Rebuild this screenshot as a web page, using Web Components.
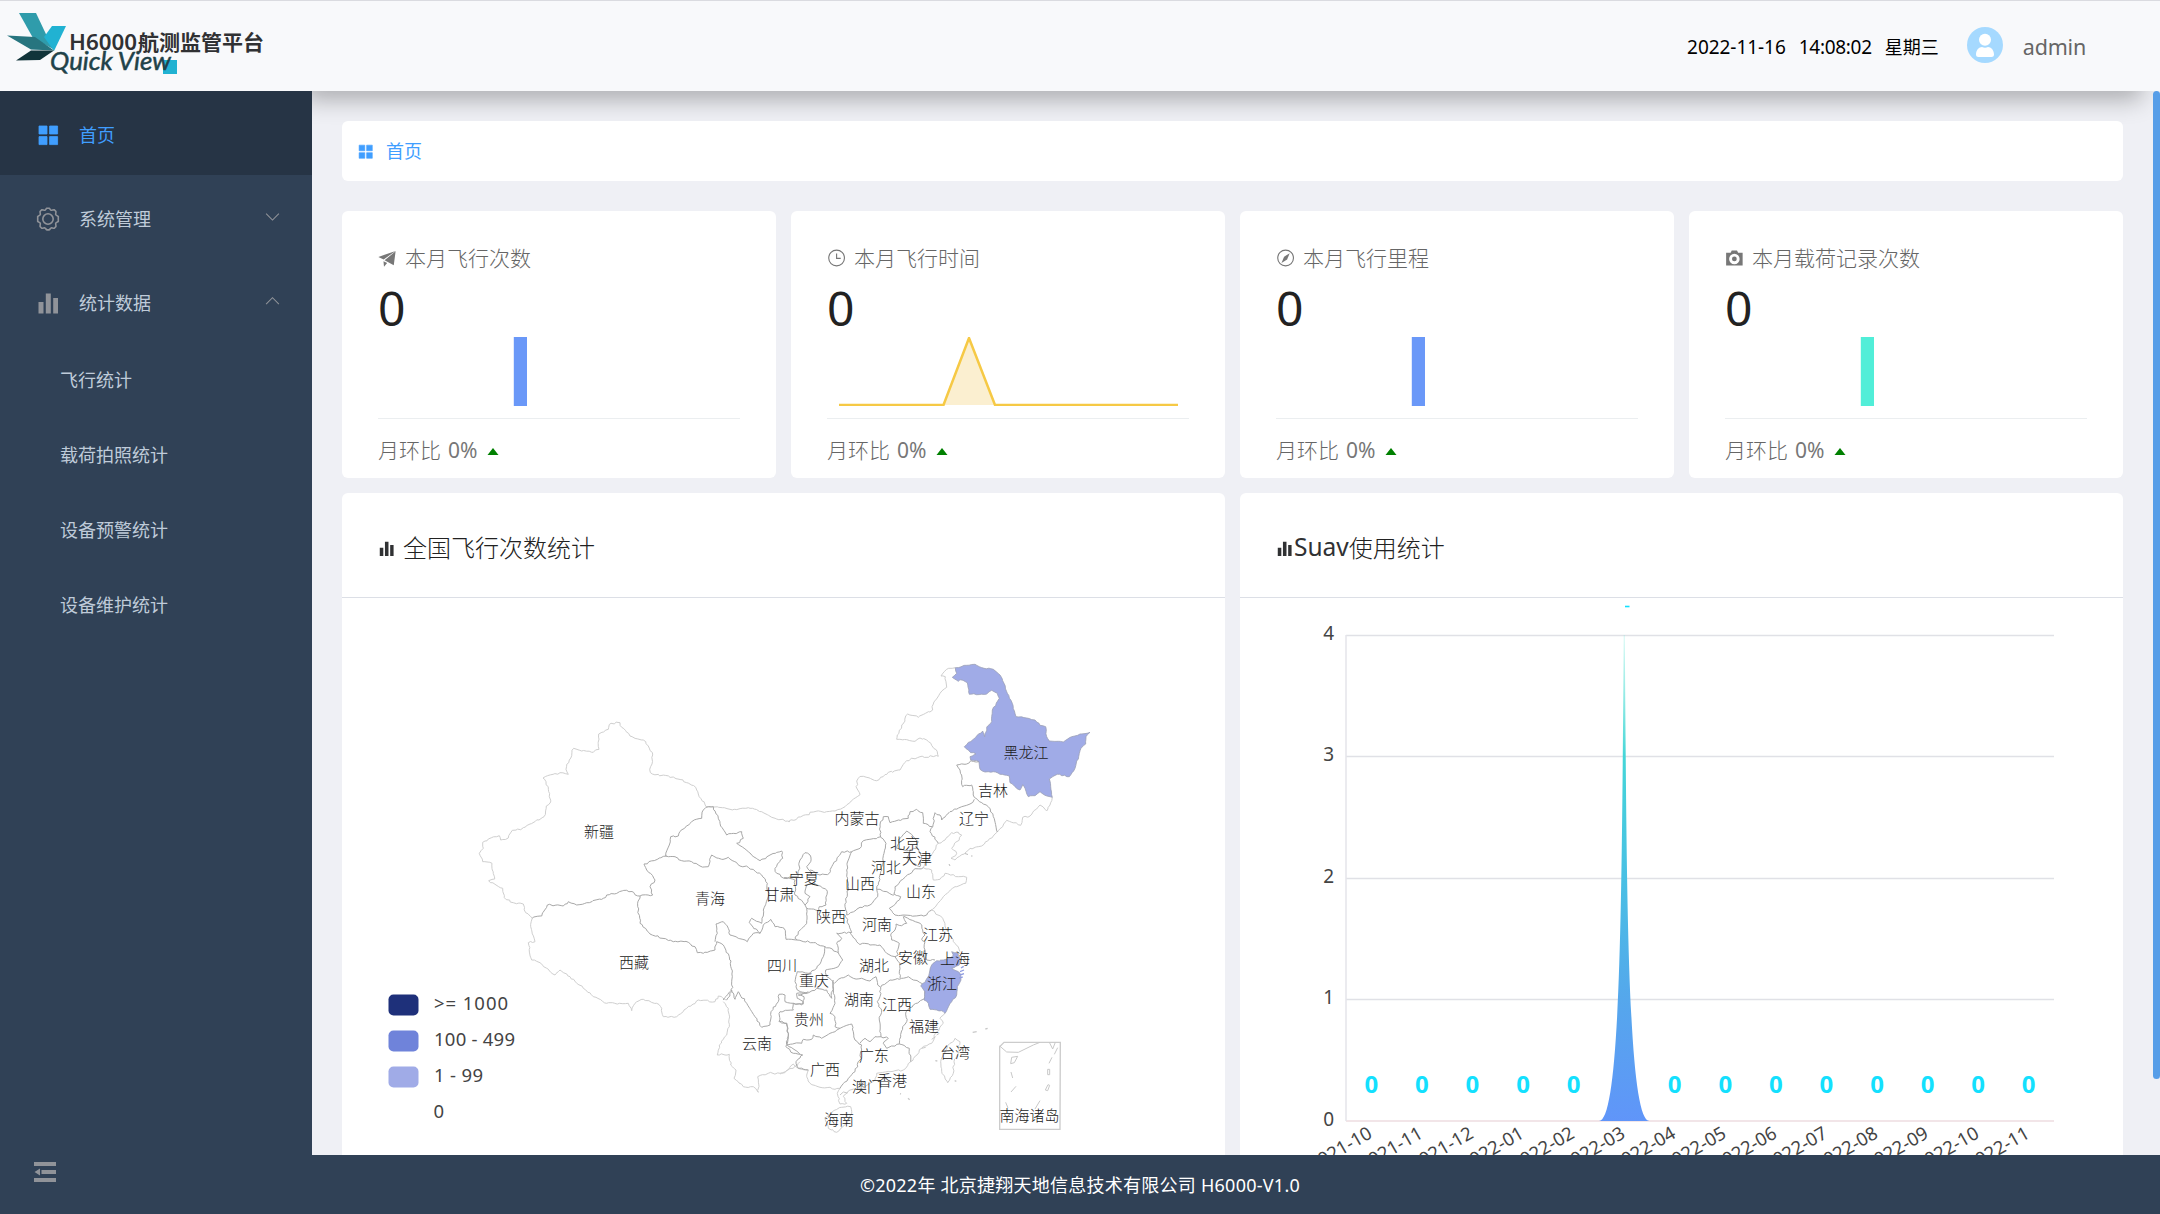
<!DOCTYPE html>
<html lang="zh-CN">
<head>
<meta charset="utf-8">
<title>H6000航测监管平台</title>
<style>
html,body{margin:0;height:100%}
body{font-family:"Noto Sans","Noto Sans CJK SC",sans-serif;font-weight:400;font-size:18px;background:#eff0f5;overflow:hidden}
</style>
</head>
<body>
<app-shell></app-shell>
<script>
const define = (name, markup, setup) => {
  const tpl = document.createElement('template');
  tpl.innerHTML = '<style>*{box-sizing:border-box}svg{display:block;flex:none}</style>' + markup;
  customElements.define(name, class extends HTMLElement {
    constructor() {
      super();
      this.attachShadow({mode: 'open'}).appendChild(tpl.content.cloneNode(true));
    }
    connectedCallback() { if (setup) setup(this.shadowRoot, this); }
  });
};

const ICONS = {
  grid: '<path d="M3 3h8v8H3zM13.6 3h8v8h-8zM3 13.6h8v8H3zM13.6 13.6h8v8h-8z" stroke="currentColor" stroke-width=".8" stroke-linejoin="round"/>',
  gear: '<g fill="none" stroke="currentColor" stroke-width="1.6"><circle cx="12" cy="12" r="5.2"/><path d="M9 3.2c.6-.2 1-1.6 1.8-2h2.4c.8.4 1.2 1.8 1.8 2 .8.3 2.300-.6 3.200-.4l1.700 1.700c.3.9-.5 2.400-.2 3.200.3.6 1.800 1.100 2.600 1.900v4.800c-.8.7-2.300 1.200-2.600 1.900-.3.800.5 2.300.2 3.200l-1.700 1.700c-.9.3-2.400-.6-3.200-.3-.6.2-1 1.600-1.800 2h-2.400c-.8-.4-1.200-1.800-1.800-2-.8-.3-2.300.6-3.200.3l-1.700-1.700c-.3-.9.5-2.400.2-3.200-.3-.7-1.800-1.200-2.600-1.900V9.600c.8-.8 2.300-1.300 2.600-1.900.3-.8-.5-2.300-.2-3.200l1.700-1.700c.9-.2 2.400.7 3.200.4z"/></g>',
  bars: '<path d="M2.500 11H7.500V22.500H2.500zM9.800 2.500h5v20h-5zM17.200 7H22v15.500h-4.800z"/>',
  plane: '<path d="M.5 10.500 23.500 2.500 7.500 14zM8.800 15 23.500 3 21 21.500zM7.300 16.200 12.200 18.500 8 23.500z"/>',
  clock: '<g fill="none" stroke="currentColor" stroke-width="1.500"><circle cx="12.800" cy="12" r="10.500"/><path d="M12.800 6v6.500h5.500"/></g>',
  compass: '<circle cx="12.800" cy="12" r="10.500" fill="none" stroke="currentColor" stroke-width="1.500"/><path d="M18.300 5.500 14.800 14l-7.500 4.800 3.500-8.600z"/>',
  camera: '<path fill-rule="evenodd" d="M1.500 5h6L9 2h7l1.500 3h6v17h-22zM12.500 6.300a7 7 0 1 0 0 14 7 7 0 0 0 0-14zM12.500 10a3.200 3.200 0 1 1 0 6.400 3.200 3.200 0 0 1 0-6.400z"/>',
  down: '<path d="m3 8 9 9 9-9" fill="none" stroke="currentColor" stroke-width="1.500"/>',
  up: '<path d="m3 17 9-9 9 9" fill="none" stroke="currentColor" stroke-width="1.500"/>',
  fold: '<path d="M1 2h22v4H1zM8.500 10h14.500v4H8.500zM1 18h22v4H1zM1.500 12 7 8.500v7z"/>'
};
define('ui-icon', '<style>:host{display:block;flex:none;width:24px;height:24px}svg{width:100%;height:100%;overflow:visible}</style><svg viewBox="0 0 24 24" fill="currentColor"></svg>',
  (root, el) => { root.querySelector('svg').innerHTML = ICONS[el.getAttribute('name')]; });

define('brand-logo', `
<style>:host{display:block}</style>
<svg width="280" height="90" viewBox="0 0 280 90">
  <path d="M19 12h17l17 36-20-11z" fill="#2f9cab"/>
  <path d="M52 25h14L54 50 44 36z" fill="#21b2d2"/>
  <path d="M7 34.500 35 36l19 13.500-23-1z" fill="#27757f"/>
  <path d="m16 59.500 15-10h23L40 59z" fill="#11343a"/>
  <path d="M163 59h14v14h-14z" fill="#21b2d2"/>
  <text x="50" y="69" font-family="Lato,sans-serif" font-style="italic" font-weight="400" font-size="24.500" fill="#1f4249" stroke="#1f4249" stroke-width=".5" textLength="121" lengthAdjust="spacingAndGlyphs">Quick View</text>
  <text x="69" y="49.300" font-size="21.500" font-weight="600" fill="#303133" font-family="Noto Sans,sans-serif" textLength="68" lengthAdjust="spacingAndGlyphs">H6000</text>
  <text x="138" y="49" font-size="21" font-weight="700" fill="#303133" font-family="Noto Sans CJK SC,sans-serif">航测监管平台</text>
</svg>`);

define('app-header', `
<style>
:host{display:flex;height:91px;flex:none;align-items:center;background:#f8f9fb;border-top:1px solid #dadbe0;color:#000;padding-right:74px}
.when{margin-left:auto;display:flex;gap:13px;line-height:24px;padding-top:2px}
.num{font-size:19px;letter-spacing:-.05px}
.time{letter-spacing:-.3px}
.avatar{margin:-2px 20px 0 28px}
.user{font-size:21.500px;color:#666;letter-spacing:-.2px;padding-top:0}
</style>
<brand-logo></brand-logo>
<div class="when"><span class="num">2022-11-16</span><span class="num time">14:08:02</span><span>星期三</span></div>
<svg class="avatar" width="36" height="36" viewBox="0 0 36 36"><circle cx="18" cy="18" r="18" fill="#a5d9ff"/><circle cx="18" cy="12.800" r="6" fill="#fff"/><path d="M9 27.500c0-4.500 3-7.500 6-7.500 2 1 4 1 6 0 3 0 6 3 6 7.500 0 1.700-1 2.500-2.500 2.500h-13C10 30 9 29.200 9 27.500z" fill="#fff"/></svg>
<span class="user">admin</span>`);

define('menu-item', `
<style>
:host{display:flex;align-items:center;height:84px;padding:4px 31px 0 36px;color:#bfcbd9;font-size:18px}
:host([active]){background:#263445;color:#409eff}
:host([sub]){height:75px;padding:0 0 1px 60px}
.ic{color:#909399;margin-right:19px}
:host([active]) .ic{color:#409eff}
.arrow{margin-left:auto;width:17px;height:17px;color:#909399;margin-top:-5px}
span{line-height:26px}
</style><span><slot></slot></span>`,
(root, el) => {
  if (el.hasAttribute('icon')) { const n = document.createElement('ui-icon'); n.className = 'ic'; n.setAttribute('name', el.getAttribute('icon')); root.querySelector('span').before(n); }
  if (el.hasAttribute('arrow')) { const a = document.createElement('ui-icon'); a.className = 'arrow'; a.setAttribute('name', el.getAttribute('arrow')); root.appendChild(a); }
});

define('side-menu', `
<style>:host{display:block;width:312px;flex:none;background:#304156}</style>
<nav>
<menu-item active icon="grid">首页</menu-item>
<menu-item icon="gear" arrow="down">系统管理</menu-item>
<menu-item icon="bars" arrow="up">统计数据</menu-item>
<menu-item sub>飞行统计</menu-item>
<menu-item sub>载荷拍照统计</menu-item>
<menu-item sub>设备预警统计</menu-item>
<menu-item sub>设备维护统计</menu-item>
</nav>`);

define('crumb-bar', `
<style>:host{display:flex;align-items:center;height:60px;flex:none;background:#fff;border-radius:6px;color:#409eff;padding-left:15px;gap:12px;position:relative}
ui-icon{width:17px;height:17px}span{line-height:26px}</style>
<ui-icon name="grid"></ui-icon><span><slot></slot></span>`);

define('metric-card', `
<style>
:host{display:flex;flex-direction:column;flex:1;height:267px;background:#fff;border-radius:6px;padding:0 36px;color:#666;font-weight:300}
.title{display:flex;align-items:center;gap:9px;font-size:21px;line-height:30px;margin-top:32px}
ui-icon{width:18px;height:18px;color:#777}
.value{font-size:48px;font-weight:400;line-height:50px;color:#222;margin-top:10px;height:54px}
.rule{border-top:1px solid #ebeef0;margin-top:12px}
.foot{display:flex;align-items:center;font-size:21px;line-height:30px;margin-top:16px}
.foot b{font-weight:400;font-size:21px;color:#777;margin-left:7px}
.foot svg{margin:3px 0 0 10px}
</style>
<div class="title"><ui-icon></ui-icon><span><slot></slot></span></div>
<div class="value">0</div>
<svg class="chart" width="362" height="69" viewBox="0 0 362 69"></svg>
<div class="rule"></div>
<div class="foot"><span>月环比</span><b>0%</b><svg width="12" height="7" viewBox="0 0 12 7"><path d="M.500 7 6 0l5.500 7z" fill="#008000"/></svg></div>`,
(root, el) => {
  const n = document.createElement('ui-icon'); n.setAttribute('name', el.getAttribute('icon'));
  root.querySelector('ui-icon').replaceWith(n);
  const c = el.getAttribute('color');
  root.querySelector('.chart').innerHTML = el.hasAttribute('line')
    ? '<path d="M117 68 142 1 168 68z" fill="#fbefd0"/><path d="M12 68H116.500L142 1 168 68H351" fill="none" stroke="' + c + '" stroke-width="2.500"/>'
    : '<rect x="135.800" y="0" width="13.200" height="69" fill="' + c + '"/>';
});

define('chart-panel', `
<style>
:host{display:flex;flex-direction:column;flex:1;min-width:0;background:#fff;border-radius:6px 6px 0 0;overflow:hidden}
header{display:flex;align-items:center;height:105px;flex:none;border-bottom:1px solid #dcdfe6;padding:3px 0 0 36px;color:#222;font-size:24px;font-weight:300}
ui-icon{width:17px;height:17px;margin-top:3px;color:#303133}
:host([wide]) header{gap:8px}
::slotted(b){font-weight:400;color:#303133;font-size:24.500px;margin-left:1px}
</style>
<header><ui-icon name="bars"></ui-icon><slot name="title"></slot></header>
<slot></slot>`);

/* Province outlines; each line names its sheet and is plotted at three units per pixel. */
const SHEETS = { A: [460, 640], B: [780, 640], C: [780, 880], D: [660, 780] };
const OUTER = [
 ['A','217,834 197,818 190,792 160,788 133,773 128,745 105,733 86,722 104,717 97,690 96,670 68,665 58,640 70,625 68,607 85,597 118,587 122,600 145,594 157,571 182,569 210,552 252,530 259,498 272,486 266,455 258,425 249,414 300,398 325,403 318,388 328,360 341,325 365,333 400,337 417,328 416,282 445,268 453,250 480,248 485,262 510,288 550,300 565,318 578,345 576,372 569,388 577,402 640,411 680,428 707,442 722,475 738,500 762,501 810,508 870,505 905,515 935,532 990,545'],
 ['B','25,545 100,516 165,513 195,500 240,464 228,440 235,415 250,409 290,422 325,397 360,390 380,362 420,350 475,349 472,335 440,300 420,294 405,304 350,298 352,285 383,222 415,232 458,210 456,200 480,160 500,142 496,110 483,108 500,88 526,83'],
 ['B','817,472 810,495 800,513 780,495 750,528 728,532 722,556 680,541 652,576 605,618 570,625 525,660 513,655 530,640 515,625 545,585 535,577 515,578 495,600 475,610 458,640 440,665 430,683 455,690 460,720 480,718 495,700 535,710 560,712 557,730 525,740 490,770 470,795 455,810 488,835 500,870 525,910 540,935'],
 ['A','217,834 212,860 225,905 205,908 215,960 240,968 285,1005 300,990 330,1010 370,1045 400,1070 440,1090 505,1090 515,1112 525,1090 550,1078 590,1090 605,1105 610,1130 650,1130 680,1105 715,1080 765,1085 775,1068 800,1080'],
 ['A','790,1085 805,1105 808,1160 800,1185 778,1215 772,1245 808,1243 812,1275 828,1290 822,1315 850,1340 880,1340 895,1357 893,1310 925,1300 960,1300 1000,1285 1020,1265'],
 ['C','0,582 25,570 40,552 60,567 85,570 80,590 90,610 120,622 150,622 165,628 180,625 172,640 180,672 200,670 190,650 210,630 250,625 285,600 290,580 330,575 370,570 392,545 425,505 455,490 470,455 490,430 480,415 495,398'],
 ['C','165,690 185,682 212,680 215,700 200,730 170,757 145,745 135,715 165,690'],
 ['C','525,475 540,485 535,520 522,545 520,580 503,608 485,575 482,545 495,515 510,490 525,475']
];
const INNER = [
 ['B','597,365 572,362 560,372 530,375 540,390 548,440 575,435 583,472 592,478 610,492 625,500 640,530 652,576'],
 ['B','583,478 570,492 545,500 510,515 485,540 480,525 465,518 458,560 450,575 475,610'],
 ['B','302,592 300,555 310,530 325,530 330,548 385,535 390,515 410,508 428,518 430,550 458,560'],
 ['B','430,683 400,690 375,712 345,740 342,762 362,770 350,785 328,805 345,825 370,825 405,828 440,825 455,810'],
 ['B','302,592 318,610 312,640 305,690 290,748 342,765'],
 ['B','290,748 293,770 270,795 240,802 200,825'],
 ['B','215,635 205,660 200,690 205,740 195,800 200,825'],
 ['B','302,590 250,602 240,625 215,635 185,635 155,680 148,700 120,705 90,690'],
 ['B','365,590 380,573 400,590 415,605 410,625 380,632 350,625 355,600 365,590'],
 ['B','410,625 425,650 420,680 400,670 380,655 390,630'],
 ['D','160,80 180,130 200,165 245,155 250,175 230,190 265,215 300,242 330,225 365,213 368,235 345,265 350,280 372,295 405,290 415,290 420,240 435,218 450,225 452,245 440,260 455,280'],
 ['D','372,293 405,300 405,345 435,375 450,350 435,340 440,315 465,310 500,330 498,375 478,380 478,393 440,385'],
 ['D','160,80 138,82 130,90 125,115 95,125 60,155 55,168 32,170 28,195 17,228'],
 ['A','620,648 552,672 560,690 585,720 570,740 578,765 540,768'],
 ['A','217,834 245,828 262,795 310,798 325,785 350,795 380,788 430,775 440,765 500,751 540,768'],
 ['A','540,768 533,800 540,850 570,882 640,905 685,907 705,920 712,938 730,940 765,930 770,905'],
 ['D','17,228 45,230 65,242 95,245 120,258 145,260 155,225 185,238 205,232 240,258 265,262 305,285 322,310 325,350 318,370 310,390 305,430 275,415 268,428 300,460 280,460 262,485 235,475 210,465 205,445 190,425 168,432 172,460 165,485'],
 ['D','300,460 310,435 332,418 345,440 372,445 378,478 412,480 460,488 495,500 535,518'],
 ['D','412,480 405,475 415,455 440,430 440,385 435,375'],
 ['D','555,405 575,458 530,460 545,475 530,490 535,518 548,540 535,560 497,570 500,590 520,605 515,655 500,630 470,625 440,640'],
 ['D','495,500 490,530 470,565 445,580 412,575 405,605 412,630 440,640 410,640 412,655 430,665 425,675 400,670'],
 ['D','170,485 190,495 208,530 217,590 215,635 200,660'],
 ['A','790,1080 815,1050 825,1078 835,1055 860,1090 885,1130 905,1162 930,1155 933,1115 955,1085 957,1063 975,1065 975,1085 1000,1090 1000,1110 960,1115 957,1145 980,1150 985,1190 978,1220 1000,1240 1020,1243'],
 ['C','40,370 70,372 72,350 55,345 85,335'],
 ['C','0,425 20,430 25,460 22,495 45,490 65,490 70,478 95,478 100,465 125,475 150,460 165,455 180,445'],
 ['C','160,300 160,340 165,370 150,400 165,410 165,440 180,445 190,440 215,432 220,455 225,480 245,495 245,510'],
 ['C','163,310 175,298 205,285 220,295 245,295 270,303 288,290 293,315 302,322 300,350 292,365 305,390 298,420 303,470'],
 ['C','240,490 255,475 270,485 285,470 303,470 325,475 310,490 320,505 358,492 388,505 392,545'],
 ['C','302,322 330,300 365,295 385,290 400,300 425,310 435,330 435,355 400,375 378,395 380,425 368,440 358,492'],
 ['C','245,510 240,540 225,575 205,595 180,625'],
 ['C','22,495 45,510 68,525 48,545 55,565 85,570'],
 ['C','210,160 235,190 270,195 300,195 320,220 345,230 355,225 350,215 358,190 335,180 332,165 345,150 348,132 365,137 380,130 370,110'],
 ['C','345,230 360,250 360,295'],
 ['C','370,108 420,130 435,165 425,178 435,185 435,210 440,240 465,240']
];
const FILLED = [
 ['B','526,83 560,76 585,73 612,85 640,88 660,105 672,130 682,160 697,190 708,230 740,234 765,240 780,256 797,260 800,290 808,303 850,306 875,290 900,282 930,277 918,290 917,312 903,325 896,350 885,385 868,410 832,403 808,417 812,440 817,472 795,466 780,455 765,467 745,470 735,445 728,434 720,450 705,440 690,428 688,408 660,403 640,395 615,396 600,388 597,365 572,360 570,350 588,342 572,338 553,320 580,298 608,273 614,290 620,262 635,245 637,210 658,175 652,160 635,151 620,162 568,163 562,128 540,119 535,124 517,112 530,100 526,83'],
 ['C','470,242 490,240 510,235 520,225 515,215 530,218 540,235 538,255 515,265 540,280 543,300 532,320 530,345 515,365 495,400 485,392 470,390 450,388 445,370 432,360 435,335 422,318 438,300 448,280 455,255 470,242']
];
const PLACES = [['新疆',599,832],['西藏',634,963],['青海',710,899],['甘肃',779.5,895],['四川',782,966],['云南',757,1044],['黑龙江',1026,753],['吉林',993,791],['辽宁',974,819],['内蒙古',857,819],['北京',905,844],['天津',917,859],['河北',886,868],['宁夏',804,879],['山西',860,884],['山东',921,892],['陕西',831,917],['河南',877,925],['江苏',938,935],['安徽',913,958],['上海',955,959],['湖北',874,966],['重庆',814,981],['浙江',942,984],['湖南',859,1000],['江西',897,1005],['贵州',809,1020],['福建',924,1027],['台湾',955,1053],['广东',874,1056],['广西',825,1070],['香港',892,1081],['澳门',867,1087],['海南',839,1120],['南海诸岛',1029.5,1116]];
const noise = (x, y) => { const s = Math.sin(x * 12.9898 + y * 78.233) * 43758.5453; return (s - Math.floor(s)) * 2 - 1; };
const trace = ([sheet, str], amp = .9) => {
  const [ox, oy] = SHEETS[sheet];
  const p = str.split(' ').map(q => { const [x, y] = q.split(',').map(Number); return [ox + x / 3, oy + y / 3]; });
  let d = 'M' + p[0].map(v => v.toFixed(1));
  for (let i = 1; i < p.length; i++) {
    const [ax, ay] = p[i - 1], [bx, by] = p[i];
    const n = Math.max(1, Math.round(Math.hypot(bx - ax, by - ay) / 2.6));
    for (let k = 1; k < n; k++) {
      const x = ax + (bx - ax) * k / n, y = ay + (by - ay) * k / n;
      d += 'L' + (x + noise(x, y) * amp).toFixed(1) + ',' + (y + noise(y, x) * amp).toFixed(1);
    }
    d += 'L' + bx.toFixed(1) + ',' + by.toFixed(1);
  }
  return d;
};

define('china-map', `
<style>:host{display:block}text{font-family:"Noto Sans","Noto Sans CJK SC",sans-serif}</style>
<svg width="883" height="557" viewBox="342 598 883 557">
  <g id="lines" fill="none" stroke-linejoin="round"></g>
  <g transform="translate(780 880) scale(.33333)" fill="none" stroke="#c8c8c8" stroke-width="3">
    <path d="M659 500 672 487H841L840 748H659z" stroke="#ccc" stroke-width="4"/>
    <path d="m659 498 21 18 35 1 45-22 20-8M808 487l10 20 8-20M833 503l-10 20M816 532l-9 18M803 568h6v16h-6zM804 614l5 2-6 16-7-2zM780 662l-15 25M693 576l5 18M708 619l-15 17M677 667l7 17M695 532l18-3-10 19-11 3z"/>
    <path d="m540 275 12-5M540 285l12-4M538 294l10-3M543 264l8-5" stroke="#8f9ce0" stroke-width="4"/>
    <path d="m578 457 12-2M616 447l7-2M384 655l5 4M360 641l3 1M466 542l6 1M524 602l5 2" stroke-width="4"/>
    <path d="m180 645 10-9 12 3M455 478l12-8M425 505l12-3M470 465l8-5" />
  </g>
  <path d="M965 853.500l3 1M971 856h1.500M949 864l1 2" stroke="#bbb"/>
  <g id="places" font-size="15" font-weight="300" fill="#1a1a1a" text-anchor="middle"></g>
  <g font-size="18.500" fill="#444">
    <rect x="388.500" y="994.500" width="30" height="21" rx="5" fill="#1e307a"/><text x="434" y="1009.500" textLength="74">&gt;= 1000</text>
    <rect x="388.500" y="1030.500" width="30" height="21" rx="5" fill="#6f83da"/><text x="434" y="1045.500" textLength="81">100 - 499</text>
    <rect x="388.500" y="1066.500" width="30" height="21" rx="5" fill="#a0abe7"/><text x="434" y="1081.500" textLength="49">1 - 99</text>
    <text x="433.500" y="1117.500">0</text>
  </g>
</svg>`, root => {
  root.querySelector('#lines').innerHTML =
    OUTER.map(l => '<path stroke="#cfcfcf" d="' + trace(l) + '"/>').join('') +
    INNER.map(l => '<path stroke="#a8a8a8" d="' + trace(l) + '"/>').join('') +
    FILLED.map(l => '<path stroke="#9a9fb5" stroke-width=".8" fill="#a0abe7" d="' + trace(l, .6) + 'Z"/>').join('');
  root.querySelector('#places').innerHTML = PLACES.map(([t, x, y]) => '<text x="' + x + '" y="' + (y + 4.5) + '">' + t + '</text>').join('');
});

define('usage-chart', `
<style>:host{display:block}text{font-family:"Noto Sans","Noto Sans CJK SC",sans-serif}</style>
<svg width="883" height="557" viewBox="1240 598 883 557">
  <defs><linearGradient id="g" x1="0" y1="0" x2="0" y2="1"><stop offset="0" stop-color="#5ee6d4" stop-opacity=".25"/><stop offset=".25" stop-color="#45d6d8"/><stop offset=".5" stop-color="#49c0e4"/><stop offset=".75" stop-color="#55a7ec"/><stop offset="1" stop-color="#6095f9"/></linearGradient></defs>
  <g id="axis"></g>
  <path transform="translate(1599 635) scale(5.050 48.600)" d="M0,10 L10,10 C5.500,10 5.500,5 5.100,0 L4.900,0 C4.500,5 4.500,10 0,10z" fill="url(#g)"/>
  <path d="M1625 606.500h4.500" stroke="#13e0fe" stroke-width="1.600"/>
  <g id="zeros" font-size="24" font-weight="700" fill="#13e0fe" text-anchor="middle"></g>
  <g id="months" font-size="18.500" fill="#444" text-anchor="end"></g>
</svg>`, root => {
  let axis = '';
  for (let i = 0; i <= 4; i++) {
    const y = [1121, 999.5, 878.5, 756.5, 635.5][i];
    axis += '<path d="M1346 ' + y + 'H2054" stroke="' + (i ? '#e0e1e6' : '#eedde0') + '" stroke-width="1.500"/><text x="1334" y="' + (y + 4.5) + '" font-size="19" fill="#444" text-anchor="end">' + i + '</text>';
  }
  root.querySelector('#axis').innerHTML = axis + '<path d="M1346 635V1121" stroke="#e4e5ea" stroke-width="1.500"/>';
  const months = ['2021-10','2021-11','2021-12','2022-01','2022-02','2022-03','2022-04','2022-05','2022-06','2022-07','2022-08','2022-09','2022-10','2022-11'];
  root.querySelector('#zeros').innerHTML = months.map((m, i) => i === 5 ? '' : '<text x="' + (1371.3 + i * 50.57) + '" y="1093">0</text>').join('');
  root.querySelector('#months').innerHTML = months.map((m, i) => '<text transform="translate(' + (1373.5 + i * 50.57) + ' 1137) rotate(-30)">' + m + '</text>').join('');
});

define('app-main', `
<style>
:host{display:flex;flex:1;min-width:0;position:relative;overflow:hidden;background:#eff0f5}
:host::before{content:"";position:absolute;left:-8px;right:18px;top:-30px;height:30px;box-shadow:0 8px 24px rgba(0,0,0,.3)}
main{display:flex;flex-direction:column;flex:1;min-width:0;padding:30px 30px 0;position:relative}
.row{display:flex;gap:15px}
.cards{margin:30px 0 15px}
.panels{flex:1}
.bar{width:7px;height:988px;background:#579ee8;border-radius:4px;flex:none;position:relative}
</style>
<main>
<crumb-bar>首页</crumb-bar>
<section class="row cards">
<metric-card icon="plane" color="#6a98f8">本月飞行次数</metric-card>
<metric-card icon="clock" color="#f6c945" line>本月飞行时间</metric-card>
<metric-card icon="compass" color="#6a98f8">本月飞行里程</metric-card>
<metric-card icon="camera" color="#51eed8">本月载荷记录次数</metric-card>
</section>
<section class="row panels">
<chart-panel wide><span slot="title">全国飞行次数统计</span><china-map></china-map></chart-panel>
<chart-panel><b slot="title">Suav</b><span slot="title">使用统计</span><usage-chart></usage-chart></chart-panel>
</section>
</main>
<div class="bar"></div>`);

define('app-footer', `
<style>
:host{display:grid;grid-template-columns:1fr auto 1fr;height:59px;flex:none;background:#304156;color:#fff;font-size:18px;align-items:center}
ui-icon{margin:-25px 0 0 33px;color:#909399}
p{margin:-1px 0 0;letter-spacing:.25px}
</style>
<ui-icon name="fold"></ui-icon><p>©2022年 北京捷翔天地信息技术有限公司 H6000-V1.0</p><span></span>`);

define('app-shell', `
<style>:host{display:flex;flex-direction:column;height:1214px;width:2160px;overflow:hidden}.body{display:flex;flex:1;min-height:0}</style>
<app-header></app-header>
<div class="body"><side-menu></side-menu><app-main></app-main></div>
<app-footer></app-footer>`);
</script>
</body>
</html>
